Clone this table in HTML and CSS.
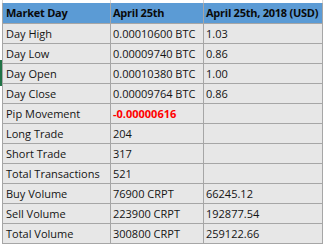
FILE: index.html
```html
<!DOCTYPE html>
<html>
<head>
<meta charset="utf-8">
<link rel="stylesheet" href="styles.css">
</head>
<body>
<div class="sheet">
  <div class="topstrip">
    <span class="t1"></span><span class="t2"></span><span class="t3"></span>
  </div>
  <div class="grid">
    <div class="cell head first">Market Day</div>
    <div class="cell head">April 25th</div>
    <div class="cell head">April 25th, 2018 (USD)</div>

    <div class="cell first">Day High</div><div class="cell">0.00010600 BTC</div><div class="cell">1.03</div>
    <div class="cell first">Day Low</div><div class="cell">0.00009740 BTC</div><div class="cell">0.86</div>
    <div class="cell first">Day Open</div><div class="cell">0.00010380 BTC</div><div class="cell">1.00</div>
    <div class="cell first">Day Close</div><div class="cell">0.00009764 BTC</div><div class="cell">0.86</div>
    <div class="cell first">Pip Movement</div><div class="cell neg">-0.00000616</div><div class="cell"></div>
    <div class="cell first">Long Trade</div><div class="cell">204</div><div class="cell"></div>
    <div class="cell first">Short Trade</div><div class="cell">317</div><div class="cell"></div>
    <div class="cell first">Total Transactions</div><div class="cell">521</div><div class="cell"></div>
    <div class="cell first">Buy Volume</div><div class="cell">76900 CRPT</div><div class="cell">66245.12</div>
    <div class="cell first">Sell Volume</div><div class="cell">223900 CRPT</div><div class="cell">192877.54</div>
    <div class="cell first">Total Volume</div><div class="cell">300800 CRPT</div><div class="cell">259122.66</div>
  </div>
  <div class="selmark"></div>
</div>
</body>
</html>
```
FILE: styles.css
```css
html, body {
  margin: 0;
  padding: 0;
  background: #ffffff;
}
.sheet {
  position: relative;
  width: 326px;
  height: 246px;
  overflow: hidden;
  font-family: "Open Sans", Lato, sans-serif;
  font-size: 11px;
  color: #141414;
}
.topstrip {
  display: flex;
  height: 3px;
  padding-left: 2px;
}
.topstrip span {
  display: block;
  box-sizing: border-box;
  border-left: 1px solid #d6d6d6;
}
.topstrip .t1 { width: 108px; }
.topstrip .t2 { width: 93px; }
.topstrip .t3 { width: 120px; border-right: 1px solid #d6d6d6; }
.grid {
  margin-left: 2px;
  width: 321px;
  box-sizing: border-box;
  border-left: 1px solid #a6a6a6;
  display: grid;
  grid-template-columns: 108px 93px 119px;
  grid-template-rows: 21px;
  grid-auto-rows: 20px;
  background: #e7e7e7;
}
.cell {
  box-sizing: border-box;
  border-right: 1px solid #a6a6a6;
  border-bottom: 1px solid #a6a6a6;
  padding-left: 2px;
  line-height: 19px;
  white-space: nowrap;
  overflow: hidden;
}
.cell.first {
  padding-left: 3px;
}
.cell.head {
  line-height: 20px;
  background: #5b9bd5;
  font-weight: bold;
  letter-spacing: -0.25px;
  color: #0a0a0a;
}
.neg {
  color: #ff0000;
  font-weight: bold;
}
.selmark {
  position: absolute;
  left: 0;
  top: 60px;
  width: 2px;
  height: 26px;
  background: #217346;
}
```
